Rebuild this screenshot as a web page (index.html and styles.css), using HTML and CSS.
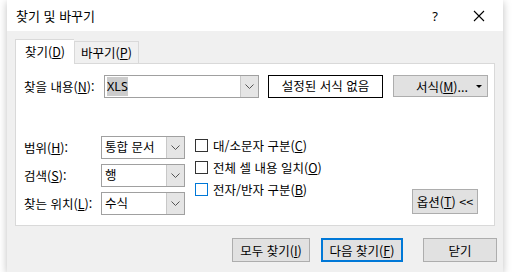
FILE: index.html
```html
<!doctype html>
<html lang="ko">
  <head>
    <meta charset="UTF-8" />
    <title>찾기 및 바꾸기</title>
    <link rel="stylesheet" href="styles.css">
  </head>
  <body>
    <div class="dialog">
      <div class="titlebar">
        <span class="title">찾기 및 바꾸기</span>
        <span class="help">?</span>
        <svg class="close" width="12" height="12" viewBox="0 0 12 12"><path d="M1 1L11 11M11 1L1 11" stroke="#000" stroke-width="1.1" fill="none"/></svg>
      </div>

      <div class="body">
        <div class="tabs">
          <div class="tab active">찾기(<u>D</u>)</div>
          <div class="tab">바꾸기(<u>P</u>)</div>
        </div>

        <div class="panel">
          <div class="find-row">
            <label class="find-label">찾을 내용(<u>N</u>):</label>
            <div class="combo combo-find">
              <span class="value"><span class="selected">XLS</span></span>
              <span class="arrow"><svg width="9" height="5" viewBox="0 0 9 5"><path d="M0.5 0.5L4.5 4.5L8.5 0.5" stroke="#555" fill="none"/></svg></span>
            </div>
            <div class="preview">설정된 서식 없음</div>
            <div class="btn btn-format">
              <span>서식(<u>M</u>)...</span>
              <span class="caret"></span>
            </div>
          </div>

          <div class="options">
            <div class="fields">
              <div class="field">
                <label>범위(<u>H</u>):</label>
                <div class="combo combo-small">
                  <span class="value">통합 문서</span>
                  <span class="arrow"><svg width="9" height="5" viewBox="0 0 9 5"><path d="M0.5 0.5L4.5 4.5L8.5 0.5" stroke="#555" fill="none"/></svg></span>
                </div>
              </div>
              <div class="field">
                <label>검색(<u>S</u>):</label>
                <div class="combo combo-small">
                  <span class="value">행</span>
                  <span class="arrow"><svg width="9" height="5" viewBox="0 0 9 5"><path d="M0.5 0.5L4.5 4.5L8.5 0.5" stroke="#555" fill="none"/></svg></span>
                </div>
              </div>
              <div class="field">
                <label>찾는 위치(<u>L</u>):</label>
                <div class="combo combo-small">
                  <span class="value">수식</span>
                  <span class="arrow"><svg width="9" height="5" viewBox="0 0 9 5"><path d="M0.5 0.5L4.5 4.5L8.5 0.5" stroke="#555" fill="none"/></svg></span>
                </div>
              </div>
            </div>

            <div class="checks">
              <div class="check"><span class="box"></span>대/소문자 구분(<u>C</u>)</div>
              <div class="check"><span class="box"></span>전체 셀 내용 일치(<u>O</u>)</div>
              <div class="check"><span class="box box-hover"></span>전자/반자 구분(<u>B</u>)</div>
            </div>

            <div class="btn btn-options">옵션(<u>T</u>) &lt;&lt;</div>
          </div>
        </div>

        <div class="actions">
          <div class="btn btn-all">모두 찾기(<u>I</u>)</div>
          <div class="btn btn-next">다음 찾기(<u>F</u>)</div>
          <div class="btn btn-close">닫기</div>
        </div>
      </div>
    </div>
  </body>
</html>
```

FILE: styles.css
```css
body {
  margin: 0;
  background-color: #fff;
  font-family: "Noto Sans CJK KR", "Noto Sans", sans-serif;
  font-size: 12.5px;
  color: #000;
}
u {
  text-decoration: underline;
  text-underline-offset: 1px;
}
.dialog {
  width: 496px;
  height: 272px;
  margin-left: 7px;
  box-shadow: 0 2px 8px rgba(0, 0, 0, 0.25);
  display: flex;
  flex-direction: column;
}
.titlebar {
  height: 31px;
  background-color: #fff;
  display: flex;
  align-items: center;
  padding-left: 9px;
  padding-right: 18px;
}
.title {
  flex: 1;
  font-size: 13px;
}
.help {
  font-family: "Noto Sans", sans-serif;
  font-size: 13px;
  margin-right: 35px;
}
.body {
  flex: 1;
  background-color: #f0f0f0;
  padding: 8px 8px 0 8px;
}
.tabs {
  display: flex;
  align-items: flex-end;
  height: 24px;
}
.tab {
  height: 22px;
  line-height: 21px;
  white-space: nowrap;
  text-align: center;
  border: 1px solid #d9d9d9;
  border-bottom: none;
  background-color: #f0f0f0;
  box-sizing: border-box;
  width: 65px;
}
.tab.active {
  height: 25px;
  width: 59px;
  line-height: 23px;
  background-color: #fff;
  margin-bottom: -1px;
  position: relative;
  z-index: 1;
  border-right: none;
}
.panel {
  height: 163px;
  box-sizing: border-box;
  background-color: #fff;
  border: 1px solid #d9d9d9;
  padding: 10px 0 0 8px;
}
.find-row {
  display: flex;
  align-items: center;
  height: 24px;
}
.find-label {
  width: 80px;
  white-space: nowrap;
}
.combo {
  display: flex;
  height: 23px;
  box-sizing: border-box;
  border: 1px solid #a0a0a0;
  background-color: #fff;
}
.combo .value {
  flex: 1;
  line-height: 20px;
  padding-left: 3px;
  white-space: nowrap;
  overflow: hidden;
}
.combo .arrow {
  width: 17px;
  background-color: #e5e5e5;
  border-left: 1px solid #c8c8c8;
  display: flex;
  align-items: center;
  justify-content: center;
}
.combo-find {
  width: 155px;
}
.combo-find .value {
  padding-left: 2px;
}
.selected {
  background-color: #cccccc;
  padding: 1px 0;
  font-family: "Noto Sans", sans-serif;
}
.preview {
  margin-left: 9px;
  width: 115px;
  height: 23px;
  box-sizing: border-box;
  border: 1px solid #000;
  text-align: center;
  line-height: 20px;
  white-space: nowrap;
}
.btn {
  box-sizing: border-box;
  background-color: #e1e1e1;
  border: 1px solid #adadad;
  display: flex;
  align-items: center;
  justify-content: center;
  white-space: nowrap;
}
.btn-format {
  margin-left: 10px;
  width: 95px;
  height: 22px;
  padding-left: 14px;
}
.btn-format span:first-child {
  flex: 1;
  text-align: center;
}
.caret {
  width: 0;
  height: 0;
  border-left: 3px solid transparent;
  border-right: 3px solid transparent;
  border-top: 3px solid #000;
  margin-right: 5px;
}
.options {
  display: flex;
  margin-top: 38px;
}
.fields {
  display: flex;
  flex-direction: column;
  gap: 5px;
}
.field {
  display: flex;
  align-items: center;
}
.field label {
  width: 77px;
  white-space: nowrap;
}
.combo-small {
  width: 84px;
}
.checks {
  margin-left: 10px;
  display: flex;
  flex-direction: column;
  gap: 4px;
}
.check {
  display: flex;
  align-items: center;
  height: 18px;
  white-space: nowrap;
}
.box {
  width: 13px;
  height: 13px;
  box-sizing: border-box;
  border: 1px solid #333;
  background-color: #fff;
  margin-right: 5px;
}
.box-hover {
  border-color: #0078d7;
}
.btn-options {
  margin-left: auto;
  margin-right: 16px;
  align-self: flex-end;
  width: 66px;
  height: 25px;
  margin-bottom: 1px;
}
.actions {
  display: flex;
  justify-content: flex-end;
  margin-top: 12px;
  margin-right: -2px;
}
.actions .btn {
  height: 24px;
}
.btn-all {
  width: 78px;
}
.btn-next {
  width: 82px;
  margin-left: 11px;
  border: 2px solid #0078d7;
}
.btn-close {
  width: 74px;
  margin-left: 20px;
}
```
